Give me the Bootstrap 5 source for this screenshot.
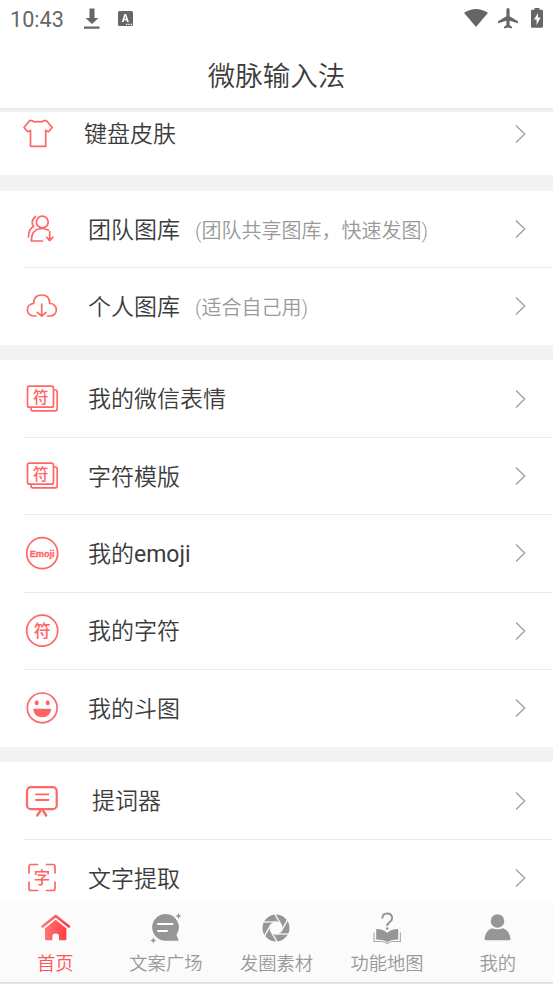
<!DOCTYPE html>
<html lang="zh-CN">
<head>
<meta charset="utf-8">
<meta name="viewport" content="width=device-width, initial-scale=1">
<title>微脉输入法</title>
<link rel="stylesheet" href="https://cdn.jsdelivr.net/npm/bootstrap@5.3.0/dist/css/bootstrap.min.css">
<style>
body{font-family:Roboto,"Noto Sans CJK SC",sans-serif;font-weight:350;color:#3c3c3c;background:#f3f3f3;line-height:1}
.app{height:984px;width:553px}
.status{height:38px;padding:0 9px 0 10px;color:#666;font-size:21.6px}
.status-time{width:71px;line-height:38px;padding-top:2px;font-weight:400}
.page-title{height:70px;font-size:27.5px;line-height:78px}
.head-shadow{height:4px;background:linear-gradient(#e9e9e9,#f3f3f3)}
.menu-row{height:77.4px;padding-left:23px;padding-right:26px;font-size:23px}
.menu-group{background:#fff;margin-bottom:15px}
.menu-group.first-group{margin-bottom:16px}
.gallery-group{margin-bottom:15.4px}
.gallery-group .menu-row{height:76.8px}
.menu-row+.menu-row::before{content:"";position:absolute;left:23px;right:0;top:-.5px;height:1px;background:#ebebeb}
.menu-row svg{flex:none}
.row-icon{width:38px;height:38px;fill:none;stroke:#ff6666;stroke-width:1.7;stroke-linecap:round;stroke-linejoin:round}
.row-icon text{fill:#ff6464;stroke:none;text-anchor:middle}
.label{margin-left:27px;line-height:34px;padding-top:3px;white-space:nowrap}
.latin{font-weight:400}
.label-inset{margin-left:31px}
.hint{font-size:20px;color:#999;margin-left:15px;line-height:34px;padding-top:3px;white-space:nowrap}
.row-first{height:63px;padding-bottom:19px}
.row-first .label{margin-left:23px;padding-top:2px}
.arrow{width:12px;height:20px;fill:none;stroke:#a2a2a2;stroke-width:1.4}
.tabs{height:82px;background:#fbfbfb;border-bottom:1px solid #dedede;color:#999;font-size:18.3px;box-shadow:0 1px 0 #e6e6e6;margin-bottom:1px}
.tab-item{color:#999;padding-top:7px}
.tab-item svg{width:40px;height:38px;fill:#969696}
.tab-item span{line-height:30px;margin-top:3px}
.tab-item.current{color:#ff5459}
</style>
</head>
<body>
<div class="app d-flex flex-column overflow-hidden">
<header class="bg-white flex-shrink-0">
 <div class="status d-flex align-items-center">
  <span class="status-time">10:43</span>
  <svg width="60" height="38" viewBox="81 0 60 38" fill="#666"><path d="M89.500 8.500h5V18h4L92 24l-6.500-6h4zM84 26.500h15.500v2.300H84z"/><rect x="118" y="11" width="15" height="15" rx="1.500"/><path d="M121.700 22l2.700-8h1.800l2.700 8h-2l-.5-1.700h-2.300l-.5 1.700zM124.500 18.800h1.600l-.8-2.700z" fill="#fff" fill-rule="evenodd"/><path d="M126 24.400h1.300m1 0h1.300m1 0h1.300" stroke="#fff" stroke-width="1.200"/></svg>
  <svg class="ms-auto" width="83" height="38" viewBox="461 0 83 38" fill="#666"><path d="M464 12.800q12-7.600 24 0L476 27z"/><path d="M506.400 10q0-2 1.600-2t1.600 2v6.300l8.400 5v2l-8.400-2.600V25l2.400 1.900v1.500l-4-.9-4 .9v-1.500l2.400-1.900v-4.300l-8.400 2.600v-2l8.400-5z"/><path d="M534.500 8h5v1.700h2.200q1.300 0 1.300 1.300v15.500q0 1.300-1.300 1.300h-9.400q-1.300 0-1.300-1.300V11q0-1.300 1.300-1.300h2.200z"/><path d="M538 13l-4 6.500h2.600V25l4-7.500H538z" fill="#fff"/></svg>
 </div>
 <div class="page-title text-center">微脉输入法</div>
 <div class="head-shadow"></div>
</header>
<main class="flex-grow-1 overflow-hidden">
 <section class="menu-group first-group">
  <div class="menu-row row-first d-flex align-items-center">
   <svg class="row-icon" viewBox="23 115 38 38"><path d="M29.500 120.700h2.700q2 2 5.800.8 3.800 1.200 5.800-.8h2.700l5.700 6.800-3.700 4.200-2.800-1.300v15.900H30.500v-15.900l-2.800 1.300-3.700-4.200z"/></svg>
   <span class="label">键盘皮肤</span><svg class="arrow ms-auto" viewBox="0 0 12 20"><path d="M1 1.500 9.700 10 1 18.500"/></svg>
  </div>
 </section>
 <section class="menu-group gallery-group">
  <div class="menu-row position-relative d-flex align-items-center">
   <svg class="row-icon" viewBox="23 210 38 38"><circle cx="42.300" cy="222" r="5.900"/><path d="M42.500 241H31.300q.4-11.500 9-12.500 5 0 8 1.500M35.500 216.500q-5.500 4.700-2 10-5 2.500-5 10.500M49.700 231.500v9m-3-3.300 3 3.400 3.200-3.400"/></svg>
   <span class="label">团队图库</span><span class="hint">(团队共享图库，快速发图)</span><svg class="arrow ms-auto" viewBox="0 0 12 20"><path d="M1 1.500 9.700 10 1 18.500"/></svg>
  </div>
  <div class="menu-row position-relative d-flex align-items-center">
   <svg class="row-icon" viewBox="23 287 38 38"><path d="M36 316h-2.500a6.200 6.200 0 0 1 .2-12.500q0-8.500 8-8.500t8 8.500a6.200 6.200 0 0 1 .8 12.500H47.500M41.700 304v12m-4.400-3.700 4.400 3.700 4.400-3.700"/></svg>
   <span class="label">个人图库</span><span class="hint">(适合自己用)</span><svg class="arrow ms-auto" viewBox="0 0 12 20"><path d="M1 1.500 9.700 10 1 18.500"/></svg>
  </div>
 </section>
 <section class="menu-group">
  <div class="menu-row position-relative d-flex align-items-center">
   <svg class="row-icon" viewBox="23 379.500 38 38"><rect x="27.500" y="385.700" width="26" height="21" rx="2"/><path d="M54 389.500h1.200q2 0 2 2v16.800q0 2-2 2H33q-2 0-2-2v-1"/><text x="40.700" y="402.300" font-size="15.500" font-weight="500">符</text></svg>
   <span class="label">我的微信表情</span><svg class="arrow ms-auto" viewBox="0 0 12 20"><path d="M1 1.500 9.700 10 1 18.500"/></svg>
  </div>
  <div class="menu-row position-relative d-flex align-items-center">
   <svg class="row-icon" viewBox="23 379.500 38 38"><rect x="27.500" y="385.700" width="26" height="21" rx="2"/><path d="M54 389.500h1.200q2 0 2 2v16.800q0 2-2 2H33q-2 0-2-2v-1"/><text x="40.700" y="402.300" font-size="15.500" font-weight="500">符</text></svg>
   <span class="label">字符模版</span><svg class="arrow ms-auto" viewBox="0 0 12 20"><path d="M1 1.500 9.700 10 1 18.500"/></svg>
  </div>
  <div class="menu-row position-relative d-flex align-items-center">
   <svg class="row-icon" viewBox="0 0 38 38"><circle cx="19.200" cy="19.200" r="15.500"/><text x="19.200" y="22.500" font-size="9.700" font-weight="700" textLength="25" lengthAdjust="spacingAndGlyphs" style="font-family:'Liberation Sans',sans-serif;stroke:#ff6464;stroke-width:.3">Emoji</text></svg>
   <span class="label">我的<span class="latin">emoji</span></span><svg class="arrow ms-auto" viewBox="0 0 12 20"><path d="M1 1.500 9.700 10 1 18.500"/></svg>
  </div>
  <div class="menu-row position-relative d-flex align-items-center">
   <svg class="row-icon" viewBox="0 0 38 38"><circle cx="19.200" cy="18.700" r="15.500"/><text x="19.300" y="24.500" font-size="17" font-weight="500">符</text></svg>
   <span class="label">我的字符</span><svg class="arrow ms-auto" viewBox="0 0 12 20"><path d="M1 1.500 9.700 10 1 18.500"/></svg>
  </div>
  <div class="menu-row position-relative d-flex align-items-center">
   <svg class="row-icon" viewBox="0 0 38 38"><circle cx="19.200" cy="18.900" r="14.900"/><g fill="#ff6464" stroke="none"><ellipse cx="13.700" cy="13.700" rx="2" ry="2.500"/><ellipse cx="24.700" cy="13.700" rx="2" ry="2.500"/><path d="M10.200 19.700h18q-.5 8.500-9 8.500t-9-8.500z"/></g></svg>
   <span class="label">我的斗图</span><svg class="arrow ms-auto" viewBox="0 0 12 20"><path d="M1 1.500 9.700 10 1 18.500"/></svg>
  </div>
 </section>
 <section class="menu-group mb-0">
  <div class="menu-row position-relative d-flex align-items-center">
   <svg class="row-icon" viewBox="23 781.500 38 38"><rect x="27" y="786.700" width="29.700" height="22" rx="4" stroke-width="2.200"/><path d="M36 793.800h12.500M36 799.500h12.500" stroke-width="1.800"/><path d="M40.500 810l-3.200 5M43 810l3.200 5" stroke-width="2.400"/></svg>
   <span class="label label-inset">提词器</span><svg class="arrow ms-auto" viewBox="0 0 12 20"><path d="M1 1.500 9.700 10 1 18.500"/></svg>
  </div>
  <div class="menu-row position-relative d-flex align-items-center">
   <svg class="row-icon" viewBox="23 859 38 38"><path d="M29 873v-6.500q0-2 2-2h6.500M46.500 864.500H53q2 0 2 2v6.500M55 882v6.500q0 2-2 2h-6.500M37.500 890.500H31q-2 0-2-2V882"/><text x="42" y="883.500" font-size="16.500" font-weight="500">字</text></svg>
   <span class="label">文字提取</span><svg class="arrow ms-auto" viewBox="0 0 12 20"><path d="M1 1.500 9.700 10 1 18.500"/></svg>
  </div>
 </section>
</main>
<nav class="tabs nav nav-justified flex-nowrap flex-shrink-0">
 <a class="tab-item current col d-flex flex-column align-items-center text-decoration-none" href="#">
  <svg viewBox="35 908 40 38"><defs><linearGradient id="homeFill" gradientUnits="userSpaceOnUse" x1="42" x2="69" y1="0" y2="0"><stop stop-color="#ff7b78"/><stop offset="1" stop-color="#ff393f"/></linearGradient></defs><path d="M42.500 926.500 55.700 916l13.200 10.500" fill="none" stroke="url(#homeFill)" stroke-width="2.600" stroke-linecap="round" stroke-linejoin="round"/><path d="M45 928.500l10.700-8.700 10.700 8.700V939q0 1.300-1.300 1.300H59V936.500q0-3-3.300-3t-3.300 3v3.800h-6.100q-1.300 0-1.300-1.300z" fill="url(#homeFill)"/></svg><span>首页</span></a>
 <a class="tab-item col d-flex flex-column align-items-center text-decoration-none" href="#">
  <svg viewBox="146 908 40 38"><path d="M165.500 914a13.300 13.300 0 0 1 11 20.800q.5 2.500 2 4.700.5 1.200-1 1.200H165.500a13.300 13.300 0 0 1 0-26.700zM178.500 913l.9 2.100 2.100.9-2.100.9-.9 2.100-.9-2.100-2.100-.9 2.100-.9zM153.300 937.500l.9 2.100 2.100.9-2.100.9-.9 2.100-.9-2.100-2.100-.9 2.100-.9z"/><path d="M158 924h14.500M158 931h9" stroke="#fff" stroke-width="2" stroke-linecap="round"/></svg><span>文案广场</span></a>
 <a class="tab-item col d-flex flex-column align-items-center text-decoration-none" href="#">
  <svg viewBox="-20 -20 40 38"><circle r="10" fill="none" stroke="#969696" stroke-width="7"/><g stroke="#fbfbfb" stroke-width="1.300"><path id="blade" d="M-1 6H14"/><use href="#blade" transform="rotate(60)"/><use href="#blade" transform="rotate(120)"/><use href="#blade" transform="rotate(180)"/><use href="#blade" transform="rotate(240)"/><use href="#blade" transform="rotate(300)"/></g></svg><span>发圈素材</span></a>
 <a class="tab-item col d-flex flex-column align-items-center text-decoration-none" href="#">
  <svg viewBox="367 908 40 38"><path d="M382.300 918.500q0-5 4.900-5t4.900 4.700c0 3.800-4.900 4-4.900 7.800" fill="none" stroke="#969696" stroke-width="2"/><circle cx="387.200" cy="928.500" r="1.300"/><path d="M376.200 929q7.500.2 11 4 3.500-3.800 11-4v10.500q-7.500.1-11 2.700-3.500-2.600-11-2.700z"/><path d="M374 932.500v9h7.500q4 .2 5.700 2.100 1.700-1.900 5.700-2.100h7.500v-9" fill="none" stroke="#aaa" stroke-width="1.100"/></svg><span>功能地图</span></a>
 <a class="tab-item col d-flex flex-column align-items-center text-decoration-none" href="#">
  <svg viewBox="478 908 40 38"><circle cx="497.500" cy="921" r="6.800"/><path d="M484.500 939q.8-8.500 7.500-10.800 5.500 2.300 11 0 6.700 2.300 7.500 10.800 0 1.300-1.300 1.300h-23.400q-1.300 0-1.300-1.300z"/></svg><span>我的</span></a>
</nav>
</div>
<script src="https://cdn.jsdelivr.net/npm/bootstrap@5.3.0/dist/js/bootstrap.bundle.min.js"></script>
</body>
</html>
